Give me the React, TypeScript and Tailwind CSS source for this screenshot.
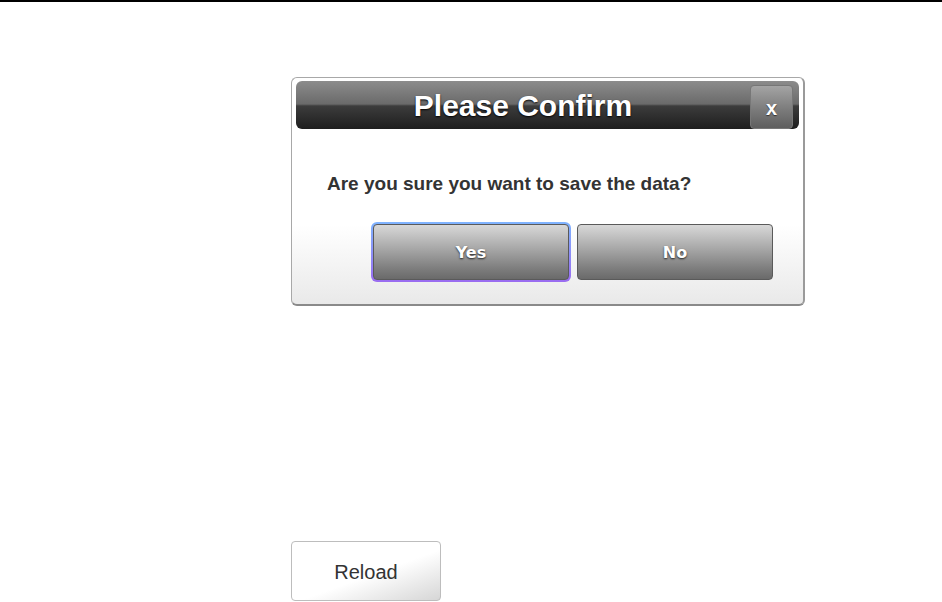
const ConfirmDialog = () => {
  return (
    <div className="w-[514px] h-[229px] rounded-[6px] border border-[#a8a8a8] border-b-2 border-b-[#8a8a8a] border-r-2 border-r-[#9a9a9a] bg-[linear-gradient(to_bottom,#ffffff_0%,#ffffff_65%,#e9e9e9_100%)] pt-[3px] pl-[4px] pr-[4px] flex flex-col">
      <div className="h-[48px] rounded-[6px] bg-[linear-gradient(to_bottom,#8c8c8c_0%,#6a6a6a_48%,#3c3c3c_52%,#1e1e1e_100%)] flex items-start pr-[6px]">
        <span className="flex-1 self-center text-center pt-[2px] text-white font-bold text-[30px] leading-none font-['Liberation_Sans',Arial,sans-serif] [text-shadow:0_1px_2px_#000]">
          Please Confirm
        </span>
        <button className="mt-[4px] w-[43px] h-[44px] rounded-[4px] border border-[#777] bg-[linear-gradient(to_bottom,#a4a4a4_0%,#7c7c7c_55%,#5e5e5e_100%)] text-white font-bold text-[20px] leading-none font-['Liberation_Sans',Arial,sans-serif] [text-shadow:0_1px_1px_#333] flex items-center justify-center pt-[2px]">
          x
        </button>
      </div>
      <p className="mt-[45px] ml-[31px] text-[#333] font-bold text-[19px] leading-none font-['Liberation_Sans',Arial,sans-serif]">
        Are you sure you want to save the data?
      </p>
      <div className="mt-[29px] flex justify-end gap-[6px] pr-[26px]">
        <div className="rounded-[6px] p-[2px] bg-[linear-gradient(to_bottom,#7fb4ff,#9a6cf0)]">
          <DlgButton label="Yes" />
        </div>
        <div className="py-[2px]">
          <DlgButton label="No" />
        </div>
      </div>
    </div>
  );
};

const DlgButton = ({ label }: { label: string }) => (
  <button className="w-[196px] h-[56px] rounded-[4px] border border-[#5a5a5a] bg-[linear-gradient(to_bottom,#d8d8d8_0%,#a6a6a6_45%,#7e7e7e_80%,#6a6a6a_100%)] text-white font-bold text-[16px] pt-[2px] font-['DejaVu_Sans',Verdana,sans-serif] [text-shadow:0_1px_2px_#222]">
    {label}
  </button>
);

export default function App() {
  return (
    <div className="w-[942px] h-[602px] overflow-hidden bg-white border-t-2 border-black">
      <div className="ml-[291px] mt-[75px]">
        <ConfirmDialog />
      </div>
      <div className="ml-[291px] mt-[235px]">
        <button className="w-[150px] h-[60px] rounded-[4px] border border-[#bdbdbd] bg-[linear-gradient(160deg,#ffffff_0%,#ffffff_55%,#d6d6d6_100%)] text-[#333] text-[20px] pt-[2px] font-['Liberation_Sans',Arial,sans-serif]">
          Reload
        </button>
      </div>
    </div>
  );
}
